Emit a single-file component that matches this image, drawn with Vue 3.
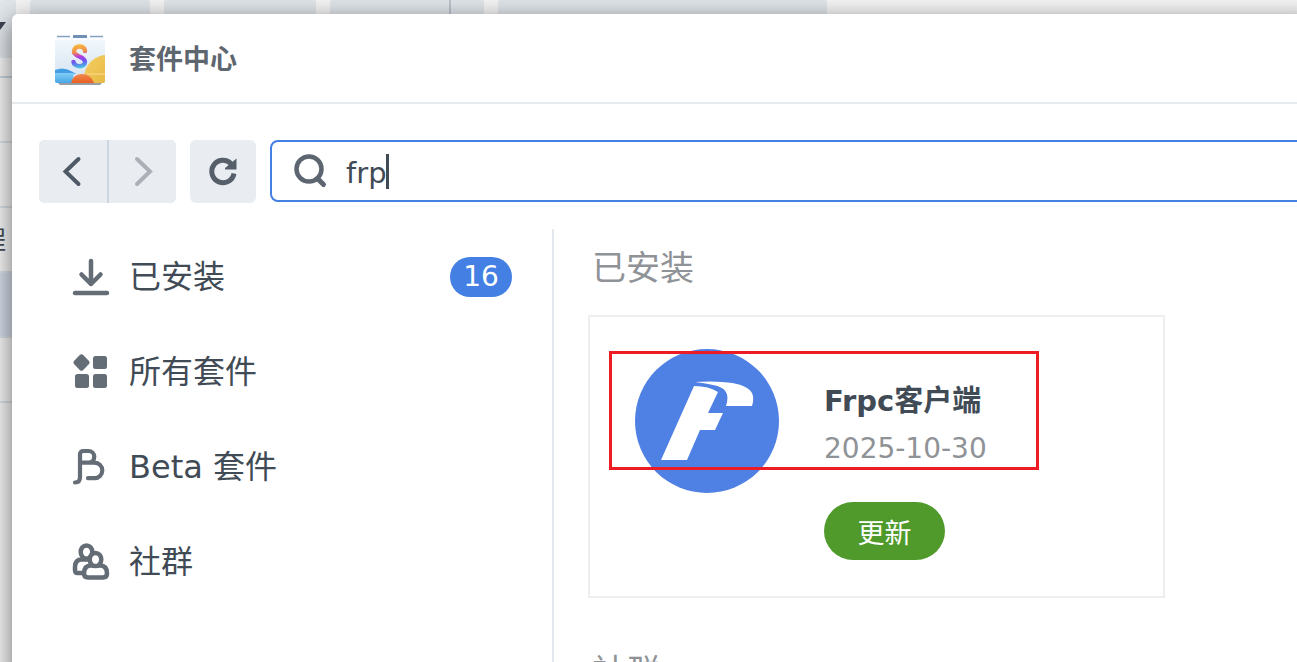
<script setup>
import { ref } from 'vue'

const keyword = ref('frp')
const navItems = [
  { id: 'installed', label: '已安装', badge: 16 },
  { id: 'all', label: '所有套件' },
  { id: 'beta', label: 'Beta 套件' },
  { id: 'community', label: '社群' },
]
const backRows = [
  { text: '' },
  { text: '' },
  { text: '程' },
  { text: '', selected: true },
  { text: '' },
]
</script>

<template>
  <div class="desktop">
    <div class="behind" aria-hidden="true">
      <div class="behind-bar">
        <div class="tool t1"><svg width="6" height="10" viewBox="0 0 6 10"><path d="M0 0h6L0 8z" fill="#3d4550" /></svg></div>
        <div class="tool t2"></div>
        <div class="tool t3"></div>
        <div class="tool t4"><span class="split"></span></div>
        <div class="tool t5"></div>
      </div>
      <div class="behind-rows">
        <div v-for="(row, i) in backRows" :key="i" class="behind-row" :class="{ selected: row.selected }">
          <span class="behind-text">{{ row.text }}</span>
        </div>
      </div>
    </div>

    <main class="window">
      <header class="titlebar">
        <svg class="app-icon" width="50" height="52" viewBox="0 0 50 52" aria-hidden="true">
          <defs>
            <linearGradient id="bag" x1="0" y1="0" x2="0" y2="1"><stop offset="0" stop-color="#f3f8fc" /><stop offset="1" stop-color="#d3e2f1" /></linearGradient>
            <linearGradient id="sun" x1="0" y1="0" x2="1" y2="1"><stop offset="0" stop-color="#f5cf62" /><stop offset="1" stop-color="#dca52c" /></linearGradient>
            <linearGradient id="sea" x1="0" y1="0" x2="0" y2="1"><stop offset="0" stop-color="#80cdf5" /><stop offset="1" stop-color="#48a6e8" /></linearGradient>
            <linearGradient id="orange" x1="0" y1="0" x2="0" y2="1"><stop offset="0" stop-color="#f08a50" /><stop offset="1" stop-color="#ea5f22" /></linearGradient>
            <linearGradient id="ess" gradientUnits="userSpaceOnUse" x1="23" y1="11" x2="26" y2="34"><stop offset="0" stop-color="#f8b63c" /><stop offset=".3" stop-color="#f28b4d" /><stop offset=".5" stop-color="#b83bdc" /><stop offset=".7" stop-color="#6c55f4" /><stop offset="1" stop-color="#45c9dc" /></linearGradient>
            <clipPath id="bagclip"><rect y="3" width="50" height="46" rx="2" /></clipPath>
          </defs>
          <path d="M2 48h46l-3 3H5z" fill="#989da3" />
          <rect y="3" width="50" height="46" rx="2" fill="url(#bag)" />
          <rect y="3" width="50" height="3" fill="#fafdff" />
          <g clip-path="url(#bagclip)">
            <circle cx="52" cy="44" r="23" fill="url(#sun)" />
            <path d="M0 36q9-4 18 2l3 2H0z" fill="#439de5" />
            <path d="M0 39h19l-2 10H0z" fill="url(#sea)" />
            <path d="M31 39h19v2H31z" fill="#f4cf70" />
            <path d="M16 49q2-9 11-9t12 9z" fill="url(#orange)" />
          </g>
          <path d="M2 2.500h13M35 2.500h13" stroke="#86a4c2" stroke-width="1.500" />
          <path d="M18 2.500h14" stroke="#6f90b6" stroke-width="3" />
          <path d="M30 17C30 11 19 11 19 17.500C19 23 30 22 30 28C30 34 19 33 18.500 28" fill="none" stroke="url(#ess)" stroke-width="4.500" stroke-linecap="round" />
        </svg>
        <h1>套件中心</h1>
      </header>

      <div class="toolbar">
        <div class="history">
          <button type="button" aria-label="后退">
            <svg width="34" height="34" viewBox="0 0 34 34" fill="none" stroke="#505a66" stroke-width="4"><path d="M22.500 4L9.500 16.500L22.500 29" stroke-linecap="round" /></svg>
          </button>
          <button type="button" aria-label="前进">
            <svg width="34" height="34" viewBox="0 0 34 34" fill="none" stroke="#acb0b6" stroke-width="4"><path d="M11 4L24 16.500L11 29" stroke-linecap="round" /></svg>
          </button>
        </div>
        <button type="button" class="refresh" aria-label="刷新">
          <svg width="34" height="34" viewBox="0 0 34 34"><path d="M28 18.500A11.200 11.200 0 1 1 25 8.700" fill="none" stroke="#555e69" stroke-width="5" /><path d="M30.500 3.500v11H19v-1.500z" fill="#555e69" /></svg>
        </button>
        <div class="search">
          <svg width="36" height="36" viewBox="0 0 36 36" fill="none" stroke="#5d6670" aria-hidden="true"><circle cx="17" cy="16" r="12.500" stroke-width="4.500" /><path d="M25.500 25.500l6 6" stroke-width="5" stroke-linecap="round" /></svg>
          <input v-model="keyword" type="text" aria-label="搜索套件" />
          <span class="caret" aria-hidden="true"></span>
        </div>
      </div>

      <div class="body">
        <nav class="sidebar">
          <a v-for="item in navItems" :key="item.id" href="#" class="nav-item">
            <svg class="nav-icon" width="38" height="38" viewBox="0 0 38 38" aria-hidden="true">
              <g v-if="item.id === 'installed'" fill="none" stroke="#646c76" stroke-width="4.500" stroke-linecap="round" stroke-linejoin="round"><path d="M19 3v23M9.500 16.500l9.500 9.500l9.500-9.500M3 35h32" /></g>
              <g v-else-if="item.id === 'all'" fill="#646c76">
                <path d="M8.500 1.300q1.500-1.300 3 0l6 6.200q1.300 1.500 0 3l-6 6.200q-1.500 1.300-3 0l-6-6.200q-1.300-1.500 0-3z" transform="translate(-.5 .5)" />
                <rect x="21" y="3" width="14" height="13" rx="2.500" />
                <rect x="3" y="21" width="14" height="14" rx="2.500" />
                <rect x="21" y="21" width="14" height="14" rx="2.500" />
              </g>
              <path v-else-if="item.id === 'beta'" d="M3 34.500Q8 34.500 8 29V6.500Q8 3 11.500 3H16.500A5.800 5.800 0 0 1 16.500 14.600H8M16.500 14.600H22.500A7.800 7.800 0 0 1 22.500 30.200H16" fill="none" stroke="#646c76" stroke-width="4.200" stroke-linecap="round" stroke-linejoin="round" />
              <g v-else fill="#fff" stroke="#646c76" stroke-width="4.500">
                <path d="M14 30H5.500Q3 30 3 27V24Q3 16.500 10 16.500H20V30z" stroke-linejoin="round" />
                <ellipse cx="14.500" cy="9" rx="5.800" ry="6.600" />
                <path d="M12 30.500Q12 22.500 19 22.500H28Q35 22.500 35 30.500Q35 34.500 31 34.500H16Q12 34.500 12 30.500z" />
                <ellipse cx="23.500" cy="16.500" rx="5.800" ry="6.600" />
              </g>
            </svg>
            <span>{{ item.label }}</span>
            <span v-if="item.badge" class="badge">{{ item.badge }}</span>
          </a>
        </nav>

        <div class="content">
          <section>
            <h2>已安装</h2>
            <div class="cards">
              <article class="card">
                <svg class="logo" width="144" height="144" viewBox="0 0 144 144" role="img" aria-label="Frpc">
                  <circle cx="72" cy="72" r="72" fill="#4f80e4" />
                  <path d="M59 37Q74 37 83 43L73 64H88L80 81H65L52 111H26z" fill="#fff" />
                  <path d="M60 33Q99 31 112 39Q121 44 117 57H91Q97 39 78 36Q69 34 60 33z" fill="#fff" />
                </svg>
                <div class="info">
                  <h3>Frpc客户端</h3>
                  <time datetime="2025-10-30">2025-10-30</time>
                  <button type="button" class="update">更新</button>
                </div>
                <div class="highlight"></div>
              </article>
            </div>
          </section>
          <section>
            <h2>社群</h2>
          </section>
        </div>
      </div>
    </main>
  </div>
</template>

<style>
body {
  background: #f5f5f5;
}
</style>

<style scoped>
* {
  box-sizing: border-box;
}
.desktop {
  position: relative;
  height: 100vh;
  overflow: hidden;
  padding: 14px 0 0 12px;
  font-family: Verdana, "DejaVu Sans", "Noto Sans CJK SC", sans-serif;
  color: #414b55;
}
.behind {
  position: absolute;
  inset: 0;
}
.behind-bar {
  display: flex;
  gap: 14px;
  height: 78px;
  border-bottom: 2px solid #c9d4de;
}
.tool {
  flex: none;
  height: 58px;
  background: #e1e6eb;
  border-radius: 2px;
}
.t1 {
  width: 16px;
  padding-top: 22px;
}
.t1 svg {
  display: block;
}
.t2 {
  width: 120px;
}
.t3 {
  width: 152px;
}
.t4 {
  width: 154px;
  padding-left: 119px;
}
.t5 {
  width: 329px;
}
.split {
  display: block;
  width: 2px;
  height: 100%;
  background: #bcc3cb;
}
.behind-row {
  display: flex;
  align-items: center;
  height: 65px;
  padding-bottom: 4px;
  border-bottom: 2px solid #d9e0e6;
}
.behind-row.selected {
  background: #d5dce9;
}
.behind-text {
  display: flex;
  justify-content: flex-end;
  width: 6px;
  font-size: 25px;
}
.window {
  position: relative;
  display: flex;
  flex-direction: column;
  height: calc(100% + 40px);
  margin-right: -20px;
  background: #fff;
  border-radius: 6px 0 0 0;
  box-shadow: 0 7px 26px rgba(0, 0, 0, 0.56);
}
.titlebar {
  display: flex;
  flex: none;
  align-items: center;
  gap: 24px;
  height: 90px;
  padding: 4px 0 0 43px;
  border-bottom: 2px solid #e5eaee;
}
h1,
h2,
h3 {
  margin: 0;
}
h1 {
  font-size: 27px;
  line-height: 40px;
  color: #5e666f;
}
.toolbar {
  display: flex;
  flex: none;
  gap: 14px;
  height: 63px;
  margin: 36px 0 26px 27px;
}
button {
  display: flex;
  align-items: center;
  justify-content: center;
  padding: 0;
  border: 0;
  background: #e9edf2;
  font-family: inherit;
}
.history {
  display: flex;
  gap: 2px;
  overflow: hidden;
  border-radius: 6px;
  background: #cbd6e1;
}
.history button {
  width: 68px;
}
.history button:last-child {
  width: 67px;
}
.refresh {
  width: 66px;
  border-radius: 6px;
}
.search {
  position: relative;
  display: flex;
  flex: 1;
  align-items: center;
  gap: 18px;
  height: 62px;
  padding-left: 20px;
  border: 2px solid #4480e3;
  border-radius: 8px;
}
.search input {
  flex: 1;
  min-width: 0;
  padding: 4px 0 0;
  border: 0;
  outline: 0;
  background: none;
  font: inherit;
  font-size: 29px;
  line-height: 40px;
  color: inherit;
}
.caret {
  position: absolute;
  top: 12px;
  left: 114px;
  width: 3px;
  height: 35px;
  background: #414b55;
}
.body {
  display: flex;
  flex: 1;
  min-height: 0;
}
.sidebar {
  flex: none;
  width: 542px;
  border-right: 2px solid #e3e8ee;
}
.nav-item {
  display: flex;
  align-items: center;
  gap: 19px;
  height: 95px;
  padding: 0 40px 0 60px;
  font-size: 32px;
  line-height: 48px;
  color: inherit;
  text-decoration: none;
}
.badge {
  margin-left: auto;
  width: 62px;
  border-radius: 20px;
  background: #4480e3;
  font-size: 28px;
  line-height: 40px;
  text-align: center;
  color: #fff;
}
.content {
  flex: 1;
  min-width: 0;
  padding: 15px 34px 0;
}
section {
  margin-bottom: 50px;
}
h2 {
  margin: 0 0 23px 4px;
  font-size: 34px;
  line-height: 48px;
  font-weight: 400;
  color: #8f9296;
}
.cards {
  display: flex;
}
.card {
  position: relative;
  display: flex;
  align-items: flex-start;
  gap: 45px;
  width: 577px;
  padding: 32px 45px 36px;
  border: 2px solid #eee;
}
.info {
  padding-top: 32px;
}
h3 {
  font-size: 29px;
  line-height: 40px;
  white-space: nowrap;
}
time {
  display: block;
  margin: 8px 0 33px;
  font-size: 28px;
  line-height: 40px;
  color: #8f9296;
}
.update {
  width: 121px;
  height: 58px;
  border-radius: 29px;
  background: #4f9a2b;
  font-size: 27px;
  color: #fff;
}
.highlight {
  position: absolute;
  top: 34px;
  left: 19px;
  width: 430px;
  height: 119px;
  border: 3px solid #ed1c24;
  pointer-events: none;
}
</style>
